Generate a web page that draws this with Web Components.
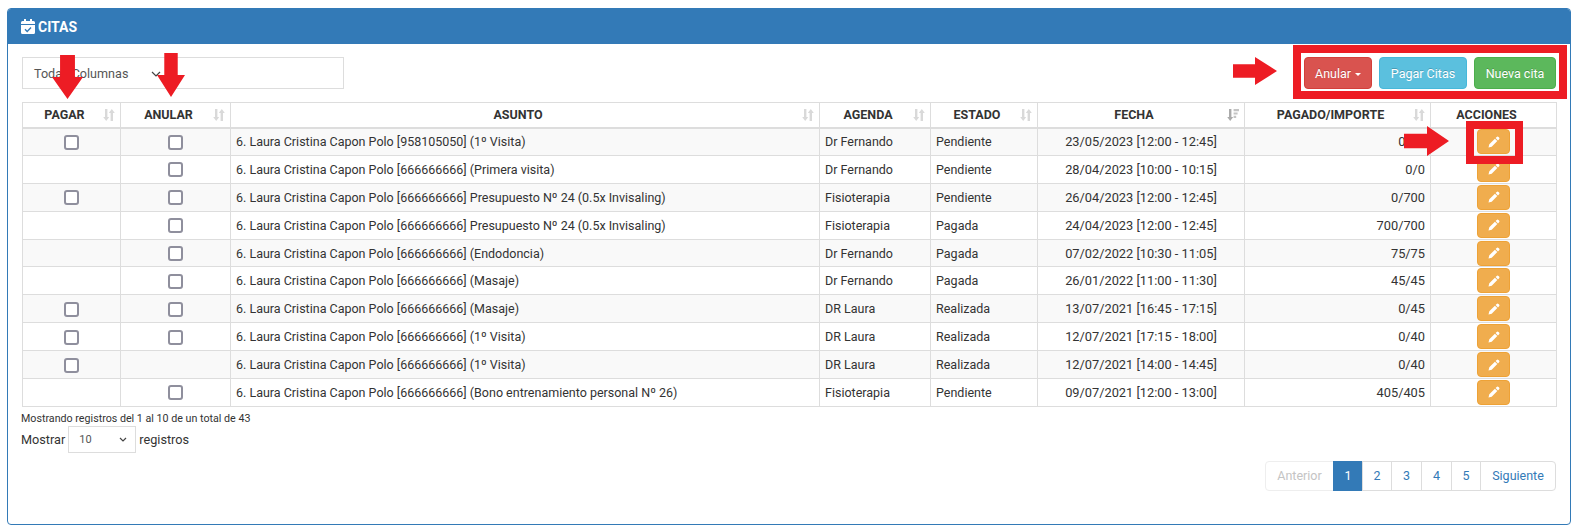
<!DOCTYPE html>
<html lang="es">
<head>
<meta charset="utf-8">
<title>Citas</title>
<style>
  html, body { margin: 0; background: #fff; }
  body { padding: 8px 8px 5px 7px; font: 12.5px Roboto, "Liberation Sans", sans-serif; color: #333; }
</style>
</head>
<body>

<citas-panel>
  <span slot="title">CITAS</span>
  <citas-toolbar></citas-toolbar>
  <citas-table></citas-table>
  <citas-footer></citas-footer>
</citas-panel>

<!-- anotaciones en rojo sobre la captura -->
<red-frame x="1293" y="45" w="274" h="54" t="8"></red-frame>
<red-frame x="1466" y="121" w="57" h="43" t="8"></red-frame>
<red-arrow dir="down" x="52" y="55" len="44" size="31"></red-arrow>
<red-arrow dir="down" x="157" y="53" len="44" size="28"></red-arrow>
<red-arrow dir="right" x="1233" y="57" len="44" size="28"></red-arrow>
<red-arrow dir="right" x="1404" y="126" len="45" size="30"></red-arrow>

<script>
const SORT_ICON = `<svg width="12" height="12" viewBox="0 0 12 12" fill="#d9d9d9"><path d="M2 0h2.400v8H6.200L3.200 12 .2 8H2z"/><path d="M7.600 12h2.400V4h1.800l-3-4-3 4h1.800z"/></svg>`;
const SORT_DESC_ICON = `<svg width="12" height="12" viewBox="0 0 12 12"><path fill="#aaa" d="M2 0h2.400v8H6.200L3.200 12 .2 8H2z"/><path fill="#c4c4c4" d="M6.600 0H12v2.200H6.600zM6.600 3.400h4v2.200h-4zM6.600 6.800h2.600V9H6.600z"/></svg>`;
const PENCIL_ICON = `<svg width="12" height="12" viewBox="0 0 12 12"><path fill="#fff" d="M8.700.9a1.300 1.300 0 0 1 1.800 0l.6.6a1.300 1.300 0 0 1 0 1.800L10 4.400 7.600 2zM6.900 2.700l2.400 2.400-5.600 5.600L.5 11.500l.8-3.200z"/></svg>`;
const CHEVRON = `<svg width="10" height="6" viewBox="0 0 10 6" fill="none" stroke="#444" stroke-width="1.200"><path d="M1 1l4 4 4-4"/></svg>`;
const CHEVRON_SMALL = `<svg width="8" height="5" viewBox="0 0 8 5" fill="none" stroke="#444" stroke-width="1.200"><path d="M1 1l3 3 3-3"/></svg>`;

class CitasPanel extends HTMLElement {
    constructor() {
        super();
        this.attachShadow({ mode: "open" });
        this.shadowRoot.innerHTML = `
            <style>
                :host { display: block; box-sizing: border-box; height: 517px; border: 1px solid #337ab7; border-radius: 4px; background: #fff; overflow: hidden; }
                .heading { display: flex; align-items: center; gap: 3px; height: 35px; padding: 0 13px; background: #337ab7; color: #fff; font-weight: 700; font-size: 14px; }
                .body { padding: 13px 14px 0; }
            </style>
            <div class="heading">
                <svg width="14" height="15" viewBox="0 0 14 15">
                    <path fill="#fff" d="M3 0h2v2h4V0h2v2h1.500A1.500 1.500 0 0 1 14 3.500V5H0V3.500A1.500 1.500 0 0 1 1.500 2H3zM0 6h14v7.500a1.500 1.500 0 0 1-1.500 1.500h-11A1.500 1.500 0 0 1 0 13.500z"/>
                    <path fill="none" stroke="#337ab7" stroke-width="1.400" d="M4 10.200l2.200 2.200 3.800-3.800"/>
                </svg>
                <slot name="title"></slot>
            </div>
            <div class="body"><slot></slot></div>
        `;
    }
}
customElements.define("citas-panel", CitasPanel);

class CitasToolbar extends HTMLElement {
    constructor() {
        super();
        this.attachShadow({ mode: "open" });
        this.shadowRoot.innerHTML = `
            <style>
                :host { display: flex; justify-content: space-between; height: 32px; margin-bottom: 13px; }
                .select { box-sizing: border-box; width: 322px; height: 32px; border: 1px solid #ddd; display: flex; align-items: center; padding-left: 11px; color: #555; font-size: 12.6px; }
                .select span { width: 117px; }
                .select svg { margin-top: 2px; }
                .buttons { display: flex; gap: 7px; }
                .btn { box-sizing: border-box; height: 32px; display: flex; align-items: center; justify-content: center; border: 1px solid; border-radius: 4px; color: #fff; text-shadow: 0 -1px 0 rgba(0,0,0,.2); }
                .red { width: 68px; background: #d9534f; border-color: #d43f3a; gap: 4px; }
                .blue { width: 88px; background: #5bc0de; border-color: #46b8da; }
                .green { width: 82px; background: #5cb85c; border-color: #4cae4c; }
                .caret { border-top: 3px solid #fff; border-left: 3px solid transparent; border-right: 3px solid transparent; margin-top: 2px; }
            </style>
            <div class="select"><span>Todas Columnas</span>${CHEVRON}</div>
            <div class="buttons">
                <div class="btn red">Anular <i class="caret"></i></div>
                <div class="btn blue">Pagar Citas</div>
                <div class="btn green">Nueva cita</div>
            </div>
        `;
    }
}
customElements.define("citas-toolbar", CitasToolbar);

const ROWS = [
    [1, 1, "6. Laura Cristina Capon Polo [958105050] (1º Visita)", "Dr Fernando", "Pendiente", "23/05/2023 [12:00 - 12:45]", "0/60"],
    [0, 1, "6. Laura Cristina Capon Polo [666666666] (Primera visita)", "Dr Fernando", "Pendiente", "28/04/2023 [10:00 - 10:15]", "0/0"],
    [1, 1, "6. Laura Cristina Capon Polo [666666666] Presupuesto Nº 24 (0.5x Invisaling)", "Fisioterapia", "Pendiente", "26/04/2023 [12:00 - 12:45]", "0/700"],
    [0, 1, "6. Laura Cristina Capon Polo [666666666] Presupuesto Nº 24 (0.5x Invisaling)", "Fisioterapia", "Pagada", "24/04/2023 [12:00 - 12:45]", "700/700"],
    [0, 1, "6. Laura Cristina Capon Polo [666666666] (Endodoncia)", "Dr Fernando", "Pagada", "07/02/2022 [10:30 - 11:05]", "75/75"],
    [0, 1, "6. Laura Cristina Capon Polo [666666666] (Masaje)", "Dr Fernando", "Pagada", "26/01/2022 [11:00 - 11:30]", "45/45"],
    [1, 1, "6. Laura Cristina Capon Polo [666666666] (Masaje)", "DR Laura", "Realizada", "13/07/2021 [16:45 - 17:15]", "0/45"],
    [1, 1, "6. Laura Cristina Capon Polo [666666666] (1º Visita)", "DR Laura", "Realizada", "12/07/2021 [17:15 - 18:00]", "0/40"],
    [1, 0, "6. Laura Cristina Capon Polo [666666666] (1º Visita)", "DR Laura", "Realizada", "12/07/2021 [14:00 - 14:45]", "0/40"],
    [0, 1, "6. Laura Cristina Capon Polo [666666666] (Bono entrenamiento personal Nº 26)", "Fisioterapia", "Pendiente", "09/07/2021 [12:00 - 13:00]", "405/405"],
];

class CitasTable extends HTMLElement {
    constructor() {
        super();
        this.attachShadow({ mode: "open" });
        const check = (on) => on ? `<input type="checkbox">` : "";
        const head = (label, icon = SORT_ICON) => `<th>${label}<span class="sort">${icon}</span></th>`;
        this.shadowRoot.innerHTML = `
            <style>
                :host { display: block; width: 1534px; }
                table { border-collapse: collapse; table-layout: fixed; width: 100%; font-size: 12.5px; color: #333; }
                th, td { border: 1px solid #ddd; padding: 0 5px; height: 27.9px; box-sizing: border-box; white-space: nowrap; overflow: hidden; }
                th { position: relative; height: 25px; border-bottom-width: 2px; text-align: center; font-weight: 700; color: #333; padding-right: 19px; }
                .sort { position: absolute; right: 5px; top: 6px; line-height: 0; }
                tbody tr:nth-child(odd) { background: #f9f9f9; }
                .c { text-align: center; font-size: 12.8px; }
                .r { text-align: right; font-size: 12.8px; }
                input { appearance: none; box-sizing: border-box; display: block; width: 15px; height: 15px; margin: 1px auto 0; background: #fff; border: 2px solid #8f8f9d; border-radius: 3px; }
                .edit { box-sizing: border-box; width: 33px; height: 25px; margin: 0 auto; display: flex; align-items: center; justify-content: center; background: #f0ad4e; border: 1px solid #eea236; border-radius: 4px; }
            </style>
            <table>
                <colgroup>
                    <col style="width:98px"><col style="width:110px"><col style="width:589px"><col style="width:111px">
                    <col style="width:107px"><col style="width:207px"><col style="width:186px"><col style="width:126px">
                </colgroup>
                <thead><tr>
                    ${head("PAGAR")}${head("ANULAR")}${head("ASUNTO")}${head("AGENDA")}${head("ESTADO")}${head("FECHA", SORT_DESC_ICON)}${head("PAGADO/IMPORTE")}<th>ACCIONES</th>
                </tr></thead>
                <tbody>
                    ${ROWS.map(r => `<tr>
                        <td>${check(r[0])}</td><td>${check(r[1])}</td>
                        <td>${r[2]}</td><td>${r[3]}</td><td>${r[4]}</td>
                        <td class="c">${r[5]}</td><td class="r">${r[6]}</td>
                        <td><div class="edit">${PENCIL_ICON}</div></td>
                    </tr>`).join("")}
                </tbody>
            </table>
        `;
    }
}
customElements.define("citas-table", CitasTable);

class CitasFooter extends HTMLElement {
    constructor() {
        super();
        this.attachShadow({ mode: "open" });
        const pages = ["Anterior", "1", "2", "3", "4", "5", "Siguiente"];
        const widths = [69, 30, 30, 31, 31, 30, 76];
        this.shadowRoot.innerHTML = `
            <style>
                :host { display: block; width: 1534px; padding-top: 5px; }
                .info { font-size: 10.7px; line-height: 14px; margin-left: -1px; }
                .length { display: flex; align-items: center; gap: 3px; margin: 0 0 0 -1px; height: 27px; font-size: 12.7px; }
                .size { box-sizing: border-box; width: 68px; height: 27px; border: 1px solid #ddd; display: flex; align-items: center; justify-content: space-between; padding: 0 8px 0 10px; font-size: 11px; color: #555; }
                .pages { display: flex; justify-content: flex-end; margin-top: 8px; }
                .pages a { box-sizing: border-box; height: 30px; display: flex; align-items: center; justify-content: center; border: 1px solid #ddd; margin-left: -1px; color: #337ab7; background: #fff; }
                .pages a.off { color: #c4c4c4; border-color: #eee; border-radius: 4px 0 0 4px; }
                .pages a.on { color: #fff; background: #337ab7; border-color: #337ab7; }
                .pages a:last-child { border-radius: 0 4px 4px 0; }
            </style>
            <div class="info">Mostrando registros del 1 al 10 de un total de 43</div>
            <div class="length">Mostrar <div class="size">10 ${CHEVRON_SMALL}</div> registros</div>
            <div class="pages">
                ${pages.map((p, i) => `<a style="width:${widths[i]}px" class="${i === 0 ? "off" : i === 1 ? "on" : ""}">${p}</a>`).join("")}
            </div>
        `;
    }
}
customElements.define("citas-footer", CitasFooter);

class RedFrame extends HTMLElement {
    connectedCallback() {
        const a = (n) => this.getAttribute(n);
        this.attachShadow({ mode: "open" });
        this.shadowRoot.innerHTML = `
            <style>
                :host { display: block; position: absolute; box-sizing: border-box; left: ${a("x")}px; top: ${a("y")}px; width: ${a("w")}px; height: ${a("h")}px; border: ${a("t")}px solid #ed1c24; pointer-events: none; }
            </style>
        `;
    }
}
customElements.define("red-frame", RedFrame);

class RedArrow extends HTMLElement {
    connectedCallback() {
        const a = (n) => Number(this.getAttribute(n));
        const len = a("len"), size = a("size");
        const shaft = size * 0.48, head = 22;
        const s0 = (size - shaft) / 2, s1 = s0 + shaft;
        const down = this.getAttribute("dir") === "down";
        const w = down ? size : len, h = down ? len : size;
        const pts = down
            ? `${s0},0 ${s1},0 ${s1},${len - head} ${size},${len - head} ${size / 2},${len} 0,${len - head} ${s0},${len - head}`
            : `0,${s0} ${len - head},${s0} ${len - head},0 ${len},${size / 2} ${len - head},${size} ${len - head},${s1} 0,${s1}`;
        this.attachShadow({ mode: "open" });
        this.shadowRoot.innerHTML = `
            <style>
                :host { display: block; position: absolute; left: ${this.getAttribute("x")}px; top: ${this.getAttribute("y")}px; line-height: 0; pointer-events: none; }
            </style>
            <svg width="${w}" height="${h}" viewBox="0 0 ${w} ${h}"><polygon fill="#ed1c24" points="${pts}"/></svg>
        `;
    }
}
customElements.define("red-arrow", RedArrow);
</script>
</body>
</html>
